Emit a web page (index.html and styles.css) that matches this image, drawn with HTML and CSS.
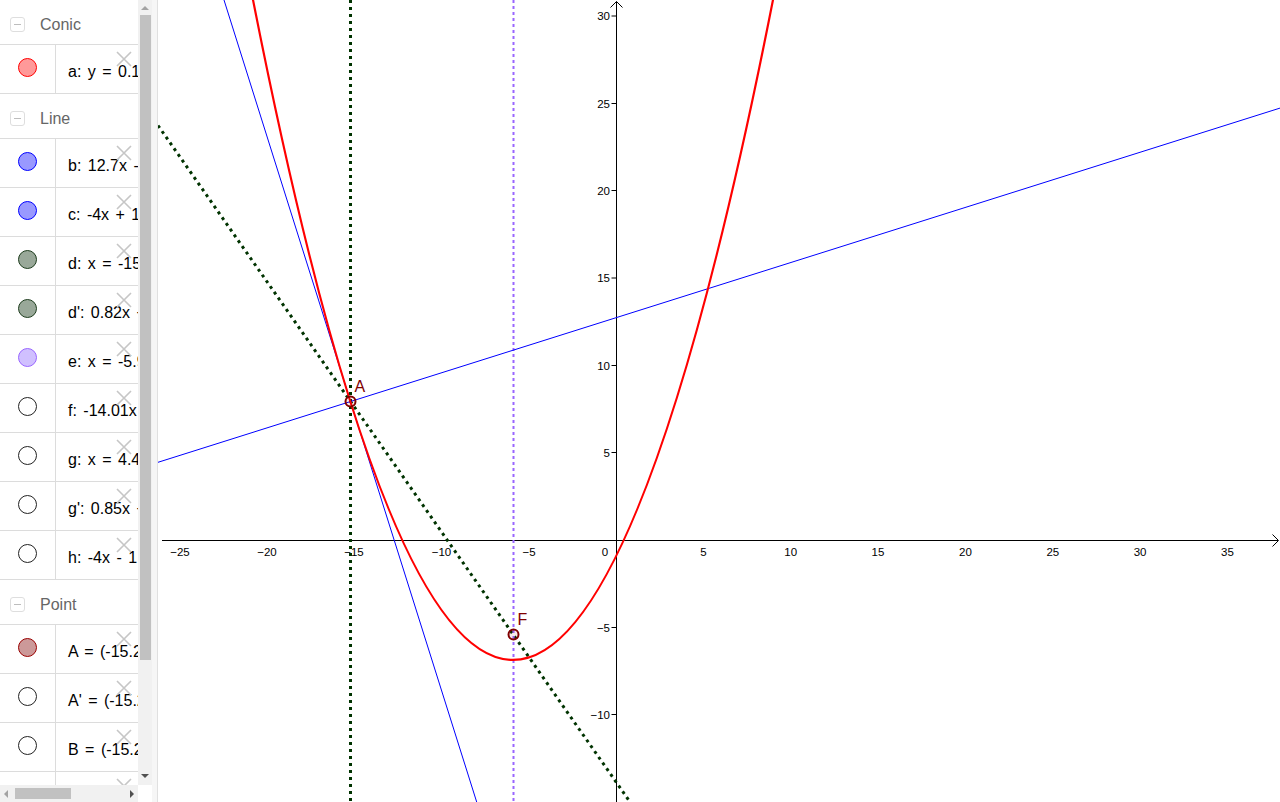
FILE: index.html
```html
<!DOCTYPE html>
<html lang="en">
<head>
<meta charset="utf-8">
<title>Graphing</title>
<link rel="stylesheet" href="styles.css">
</head>
<body>
<div class="app">
  <aside class="algebra">
    <div class="algebra-main">
      <div class="list">
        <div class="group-head"><span class="toggle"></span><span class="group-title">Conic</span></div>
        <div class="item"><div class="marker-cell"><span class="marker m-red"></span></div><div class="item-text">a: y = 0.17x² + 2.01x − 0.94</div><svg class="del" viewBox="0 0 16 16"><path d="M1 1L15 15M15 1L1 15"/></svg></div>

        <div class="group-head"><span class="toggle"></span><span class="group-title">Line</span></div>
        <div class="item"><div class="marker-cell"><span class="marker m-blue"></span></div><div class="item-text">b: 12.7x - 40y = -514.64</div><svg class="del" viewBox="0 0 16 16"><path d="M1 1L15 15M15 1L1 15"/></svg></div>
        <div class="item"><div class="marker-cell"><span class="marker m-blue"></span></div><div class="item-text">c: -4x + 1.26y = 70.92</div><svg class="del" viewBox="0 0 16 16"><path d="M1 1L15 15M15 1L1 15"/></svg></div>
        <div class="item"><div class="marker-cell"><span class="marker m-green"></span></div><div class="item-text">d: x = -15.23</div><svg class="del" viewBox="0 0 16 16"><path d="M1 1L15 15M15 1L1 15"/></svg></div>
        <div class="item"><div class="marker-cell"><span class="marker m-green"></span></div><div class="item-text">d': 0.82x + 0.57y = -7.99</div><svg class="del" viewBox="0 0 16 16"><path d="M1 1L15 15M15 1L1 15"/></svg></div>
        <div class="item"><div class="marker-cell"><span class="marker m-purple"></span></div><div class="item-text">e: x = -5.9</div><svg class="del" viewBox="0 0 16 16"><path d="M1 1L15 15M15 1L1 15"/></svg></div>
        <div class="item"><div class="marker-cell"><span class="marker m-empty"></span></div><div class="item-text">f: -14.01x - 4.41y = 178.43</div><svg class="del" viewBox="0 0 16 16"><path d="M1 1L15 15M15 1L1 15"/></svg></div>
        <div class="item"><div class="marker-cell"><span class="marker m-empty"></span></div><div class="item-text">g: x = 4.42</div><svg class="del" viewBox="0 0 16 16"><path d="M1 1L15 15M15 1L1 15"/></svg></div>
        <div class="item"><div class="marker-cell"><span class="marker m-empty"></span></div><div class="item-text">g': 0.85x + 0.53y = 3.76</div><svg class="del" viewBox="0 0 16 16"><path d="M1 1L15 15M15 1L1 15"/></svg></div>
        <div class="item"><div class="marker-cell"><span class="marker m-empty"></span></div><div class="item-text">h: -4x - 1.26y = 51.02</div><svg class="del" viewBox="0 0 16 16"><path d="M1 1L15 15M15 1L1 15"/></svg></div>

        <div class="group-head"><span class="toggle"></span><span class="group-title">Point</span></div>
        <div class="item"><div class="marker-cell"><span class="marker m-darkred"></span></div><div class="item-text">A = (-15.23, 7.92)</div><svg class="del" viewBox="0 0 16 16"><path d="M1 1L15 15M15 1L1 15"/></svg></div>
        <div class="item"><div class="marker-cell"><span class="marker m-empty"></span></div><div class="item-text">A' = (-15.23, -21.57)</div><svg class="del" viewBox="0 0 16 16"><path d="M1 1L15 15M15 1L1 15"/></svg></div>
        <div class="item"><div class="marker-cell"><span class="marker m-empty"></span></div><div class="item-text">B = (-15.23, 0)</div><svg class="del" viewBox="0 0 16 16"><path d="M1 1L15 15M15 1L1 15"/></svg></div>
        <div class="item"><div class="marker-cell"><span class="marker m-empty"></span></div><div class="item-text">C = (4.42, 0)</div><svg class="del" viewBox="0 0 16 16"><path d="M1 1L15 15M15 1L1 15"/></svg></div>
      </div>
      <div class="vscroll"><span class="arrow-up"></span><span class="vthumb"></span><span class="arrow-down"></span></div>
    </div>
    <div class="hbar">
      <div class="hscroll"><span class="arrow-left"></span><span class="hthumb"></span><span class="arrow-right"></span></div>
      <div class="corner"></div>
    </div>
  </aside>
  <div class="divider"></div>
  <main class="graphics">
    <svg class="plot" width="1122" height="802" viewBox="158 0 1122 802">
      <!-- axes -->
      <line class="axis" x1="162" y1="540.5" x2="1278" y2="540.5"/>
      <polyline class="axis" points="1272.5,534.5 1278.5,540.5 1272.5,546.5"/>
      <line class="axis" x1="616.5" y1="802" x2="616.5" y2="1.5"/>
      <polyline class="axis" points="610.5,7.5 616.5,1.5 622.5,7.5"/>
      <path class="axis" d="M611.5 16H616.5 M611.5 103.5H616.5 M611.5 190.5H616.5 M611.5 278H616.5 M611.5 365.5H616.5 M611.5 452.5H616.5 M611.5 627.5H616.5 M611.5 714.5H616.5"/>

      <g class="xlabels">
        <text x="180" y="556">−25</text>
        <text x="267" y="556">−20</text>
        <text x="354" y="556">−15</text>
        <text x="441.5" y="556">−10</text>
        <text x="529" y="556">−5</text>
        <text x="703.4" y="556">5</text>
        <text x="790.7" y="556">10</text>
        <text x="878" y="556">15</text>
        <text x="965.4" y="556">20</text>
        <text x="1052.8" y="556">25</text>
        <text x="1140.1" y="556">30</text>
        <text x="1227.5" y="556">35</text>
      </g>
      <text class="origin" x="605" y="556">0</text>
      <g class="ylabels">
        <text x="610" y="20">30</text>
        <text x="610" y="107.5">25</text>
        <text x="610" y="194.8">20</text>
        <text x="610" y="282.2">15</text>
        <text x="610" y="369.5">10</text>
        <text x="610" y="456.9">5</text>
        <text x="610" y="631.6">−5</text>
        <text x="610" y="718.9">−10</text>
      </g>

      <!-- objects -->
      <line class="dot-green" x1="158" y1="125.5" x2="630" y2="802"/>
      <line class="dot-green" x1="350.5" y1="0" x2="350.5" y2="802"/>
      <line class="dot-purple" x1="513.5" y1="0" x2="513.5" y2="802"/>
      <line class="blue" x1="158" y1="462.3" x2="1280" y2="108.1"/>
      <line class="blue" x1="224" y1="0" x2="476.7" y2="802"/>
      <path class="red" d="M233 -105.6 Q513 1425.5 793 -105.6"/>

      <circle class="pt" cx="350.5" cy="401.5" r="5"/>
      <circle class="pt" cx="513.5" cy="634.5" r="5"/>
      <text class="ptlabel" x="354.5" y="392">A</text>
      <text class="ptlabel" x="517.5" y="625">F</text>
    </svg>
  </main>
</div>
</body>
</html>
```

FILE: styles.css
```css
html, body {
  margin: 0;
  padding: 0;
  background: #fff;
  overflow: hidden;
}

body {
  font-family: "Liberation Sans", Arial, sans-serif;
}

.app {
  display: flex;
  width: 1280px;
  height: 802px;
}

/* ---------- algebra view ---------- */
.algebra {
  flex: none;
  width: 152px;
  display: flex;
  flex-direction: column;
}

.algebra-main {
  display: flex;
  height: 785px;
}

.list {
  width: 138px;
  overflow: hidden;
  background: #fff;
}

.group-head {
  height: 45px;
  box-sizing: border-box;
  border-bottom: 1px solid #dcdcdc;
  padding-top: 5px;
  display: flex;
  align-items: center;
}

.toggle {
  width: 13px;
  height: 13px;
  margin-left: 10px;
  border: 1px solid #dedede;
  border-radius: 3px;
  display: flex;
  align-items: center;
  justify-content: center;
}

.toggle::before {
  content: "";
  width: 7px;
  height: 1px;
  background: #bdbdbd;
}

.group-title {
  margin-left: 15px;
  font-size: 16px;
  color: #666;
}

.item {
  position: relative;
  height: 49px;
  box-sizing: border-box;
  border-bottom: 1px solid #dcdcdc;
  display: flex;
}

.marker-cell {
  flex: none;
  width: 56px;
  box-sizing: border-box;
  border-right: 1px solid #dcdcdc;
  padding-bottom: 4px;
  display: flex;
  align-items: center;
  justify-content: center;
}

.marker {
  width: 17px;
  height: 17px;
  border-radius: 50%;
  border: 1px solid #222;
  background: #fff;
}

.m-red { background: #ff9999; border-color: #ff0000; }
.m-blue { background: #9999ff; border-color: #0000ff; }
.m-green { background: #99a899; border-color: #1e3d1e; }
.m-purple { background: #d0c0ff; border-color: #9966ff; }
.m-darkred { background: #cc9999; border-color: #990000; }
.m-empty { background: #fff; border-color: #222; }

.item-text {
  padding-left: 12px;
  padding-top: 5px;
  display: flex;
  align-items: center;
  font-size: 16px;
  word-spacing: 2px;
  color: #000;
  white-space: nowrap;
}

.del {
  position: absolute;
  right: 6px;
  top: 6px;
  width: 16px;
  height: 16px;
  fill: none;
  stroke: #c6c6c6;
  stroke-width: 1.6;
}

/* scrollbars */
.vscroll {
  flex: none;
  width: 14px;
  background: #f1f1f1;
  display: flex;
  flex-direction: column;
  align-items: center;
}

.arrow-up {
  margin-top: 6px;
  width: 0;
  height: 0;
  border-left: 4px solid transparent;
  border-right: 4px solid transparent;
  border-bottom: 4px solid #a3a3a3;
}

.vthumb {
  margin-top: 5px;
  width: 11px;
  height: 645px;
  background: #c1c1c1;
}

.arrow-down {
  margin-top: auto;
  margin-bottom: 7px;
  width: 0;
  height: 0;
  border-left: 4px solid transparent;
  border-right: 4px solid transparent;
  border-top: 4px solid #505050;
}

.hbar {
  display: flex;
  height: 17px;
}

.hscroll {
  width: 138px;
  background: #f1f1f1;
  display: flex;
  align-items: center;
}

.arrow-left {
  margin-left: 4px;
  width: 0;
  height: 0;
  border-top: 4px solid transparent;
  border-bottom: 4px solid transparent;
  border-right: 4px solid #a3a3a3;
}

.hthumb {
  margin-left: 7px;
  width: 56px;
  height: 11px;
  background: #c1c1c1;
}

.arrow-right {
  margin-left: auto;
  margin-right: 4px;
  width: 0;
  height: 0;
  border-top: 4px solid transparent;
  border-bottom: 4px solid transparent;
  border-left: 4px solid #505050;
}

.corner {
  width: 14px;
  background: #fff;
}

.divider {
  flex: none;
  width: 6px;
  box-sizing: border-box;
  background: #f6f6f6;
  border-right: 1px solid #e0e0e0;
}

/* ---------- graphics view ---------- */
.graphics {
  flex: 1;
  overflow: hidden;
  background: #fff;
}

.plot {
  display: block;
}

.axis {
  fill: none;
  stroke: #000;
  stroke-width: 1;
}

.xlabels text,
.ylabels text,
.origin {
  font-family: "Liberation Sans", Arial, sans-serif;
  font-size: 11.5px;
  fill: #000;
}

.xlabels text,
.origin {
  text-anchor: middle;
}

.ylabels text {
  text-anchor: end;
}

.dot-green {
  stroke: #003300;
  stroke-width: 3;
  stroke-dasharray: 3 4;
  fill: none;
}

.dot-purple {
  stroke: #9966ff;
  stroke-width: 2;
  stroke-dasharray: 3 3;
  fill: none;
}

.blue {
  stroke: #0000ff;
  stroke-width: 1;
  fill: none;
}

.red {
  stroke: #ff0000;
  stroke-width: 2.2;
  fill: none;
}

.pt {
  fill: rgba(153, 0, 0, 0.08);
  stroke: #800000;
  stroke-width: 2;
}

.ptlabel {
  font-family: "Liberation Sans", Arial, sans-serif;
  font-size: 16px;
  fill: #800000;
}
```
